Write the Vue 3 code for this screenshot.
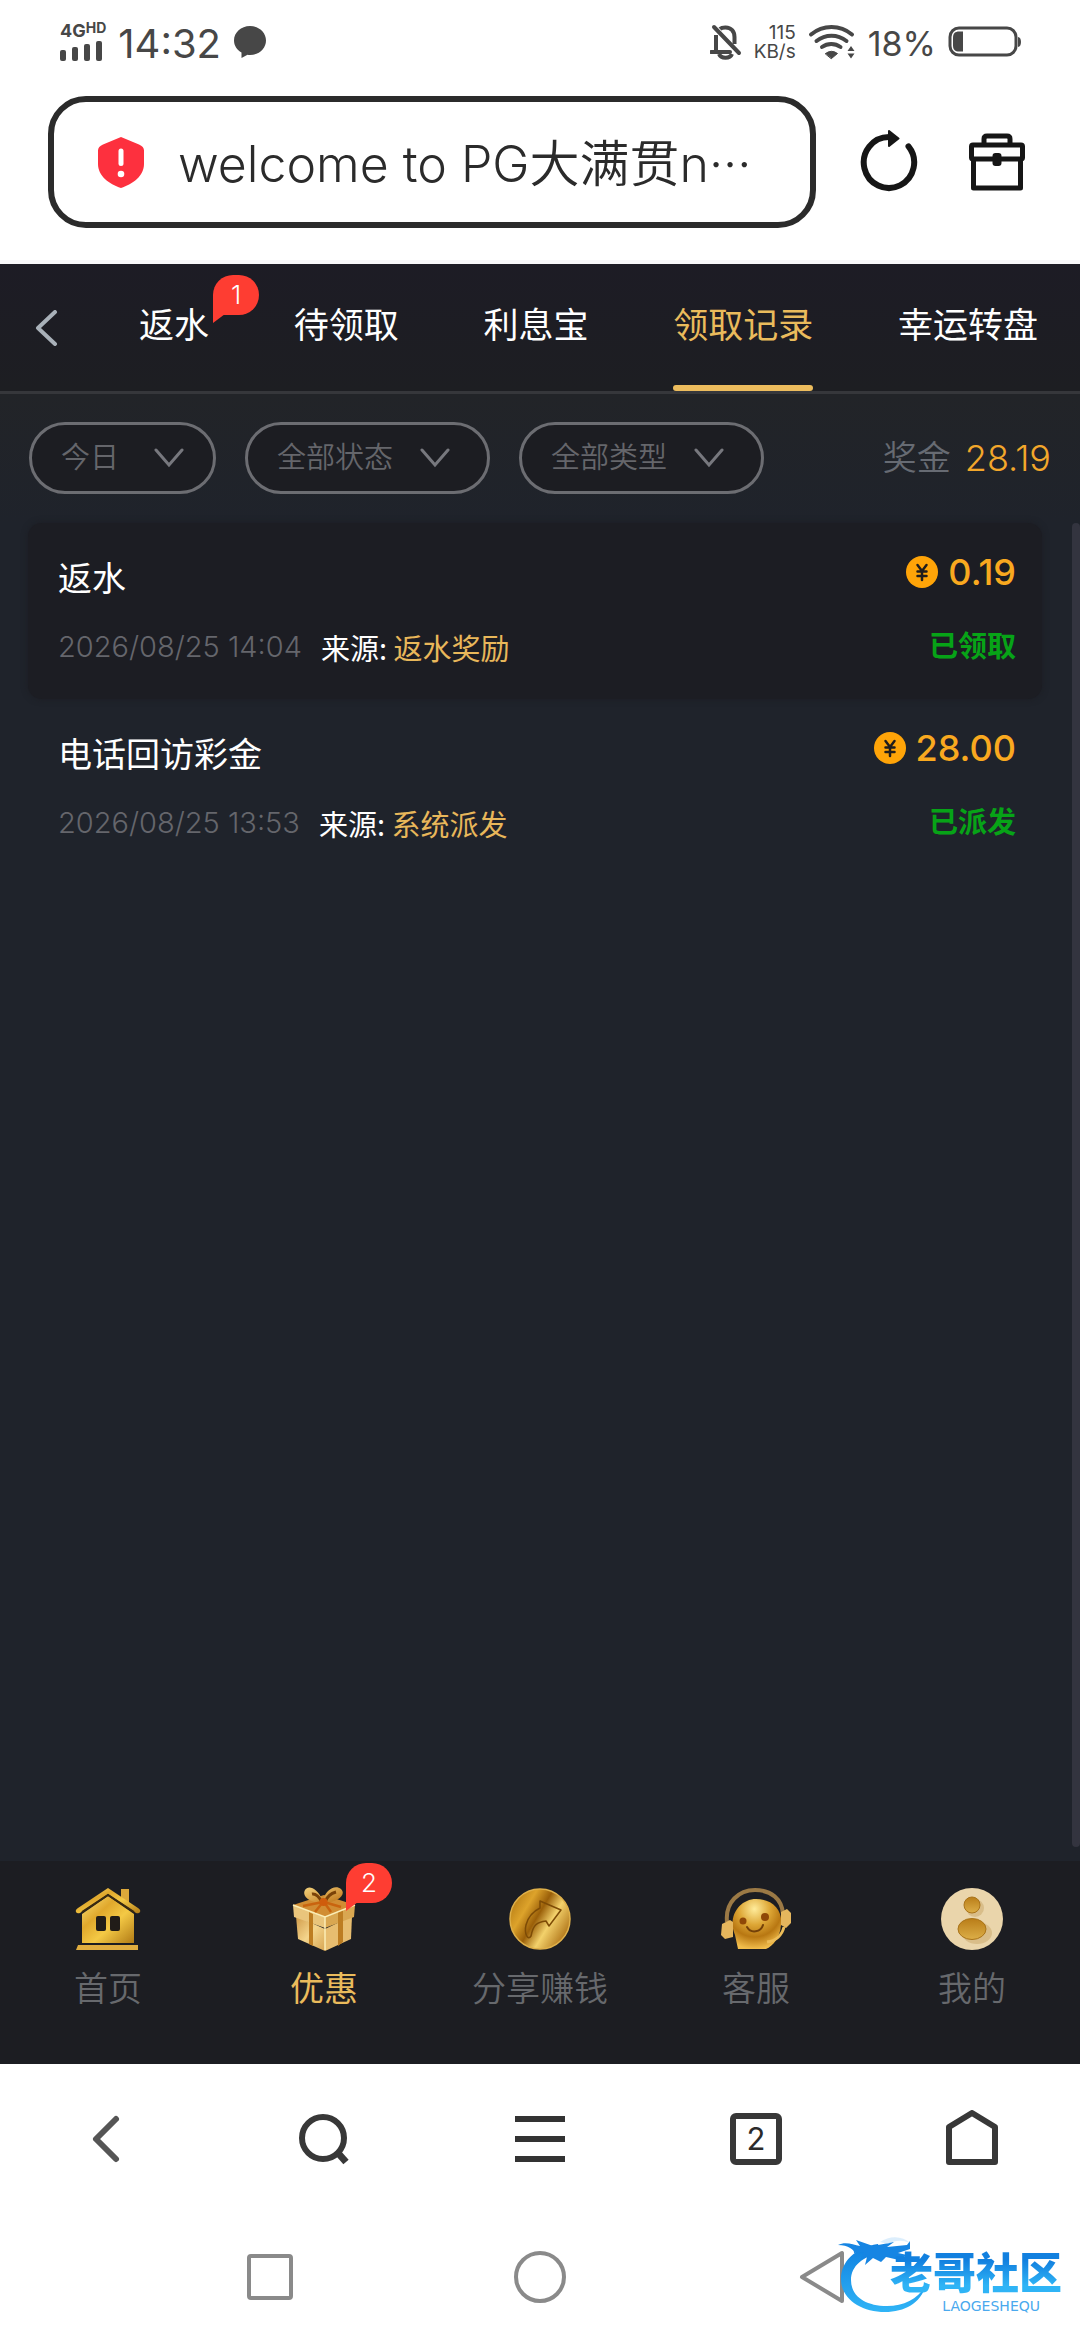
<script setup>
import { ref } from 'vue'

const address = ref('welcome to PG大满贯n···')

const tabs = [
  { label: '返水', badge: 1 },
  { label: '待领取' },
  { label: '利息宝' },
  { label: '领取记录' },
  { label: '幸运转盘' },
]
const activeTab = ref('领取记录')

const filters = [
  { id: 'date', name: '日期', value: '今日', short: true },
  { id: 'state', name: '状态', value: '全部状态' },
  { id: 'type', name: '类型', value: '全部类型' },
]

const records = [
  { title: '返水', time: '2026/08/25 14:04', source: '返水奖励', amount: '0.19', status: '已领取' },
  { title: '电话回访彩金', time: '2026/08/25 13:53', source: '系统派发', amount: '28.00', status: '已派发' },
]

const nav = [
  { icon: 'home', label: '首页' },
  { icon: 'gift', label: '优惠', badge: 2, active: true },
  { icon: 'share', label: '分享赚钱' },
  { icon: 'service', label: '客服' },
  { icon: 'me', label: '我的' },
]
</script>

<template>
  <div class="screen">
    <header class="status-bar">
      <div class="status-group">
        <div class="signal">
          <span class="network">4G<sup>HD</sup></span>
          <svg width="44" height="20" viewBox="0 0 44 20" fill="#474747">
            <rect x="0" y="9" width="6" height="11" rx="2" />
            <rect x="12" y="6" width="6" height="14" rx="2" />
            <rect x="24" y="3" width="6" height="17" rx="2" />
            <rect x="36" y="0" width="6" height="20" rx="2" />
          </svg>
        </div>
        <time class="clock">14:32</time>
        <svg width="34" height="34" viewBox="0 0 34 34" fill="#474747">
          <path d="M17 1C8 1 1 7.500 1 15.500c0 5 3 9.500 7.500 12V33l6-3.200c.8.2 1.700.2 2.500.2 9 0 16-6.500 16-14.500S26 1 17 1z" />
        </svg>
      </div>
      <div class="status-group">
        <svg width="32" height="36" viewBox="0 0 32 36" fill="none" stroke="#474747" stroke-width="4">
          <path d="M6 11v16M10 5c2-2 9-2.500 12 1 2 2 2.500 4 2.500 7v7" />
          <path d="M1 28h19" stroke-linecap="round" />
          <path d="M9 30c2 5 11 5 13 0" />
          <path d="M4 3l25 26" stroke-linecap="round" />
        </svg>
        <div class="speed"><span>115</span><span>KB/s</span></div>
        <svg width="48" height="36" viewBox="0 0 48 36" fill="none" stroke="#474747" stroke-width="4" stroke-linecap="round">
          <path d="M3 10.500C15 .5 32 .5 44 10.500" />
          <path d="M8.500 17c9-7 21-7 30 0" />
          <path d="M14 23c5.500-4 13-4 18.500 0" />
          <path d="M17.500 29.500q6-4.500 12 0l-6 5z" fill="#474747" stroke-width="1" />
          <path d="M39.500 27l3.500-5 3.500 5zM39.500 29.500l3.500 5 3.500-5z" fill="#474747" stroke="none" />
        </svg>
        <span class="percent">18%</span>
        <svg width="74" height="32" viewBox="0 0 74 32">
          <rect x="2" y="2" width="66" height="27" rx="9" fill="none" stroke="#474747" stroke-width="3" />
          <path d="M15 5.500H11c-4 0-6 2-6 6v8c0 4 2 6 6 6h4z" fill="#474747" />
          <path d="M70 11c4 0 4 10 0 10z" fill="#474747" />
        </svg>
      </div>
    </header>

    <div class="address-bar">
      <label class="address">
        <svg width="46" height="52" viewBox="0 0 46 52">
          <path d="M23 1L41 8.500q5 2 5 6V28C46 40 35 48 23 52 11 48 0 40 0 28V14.500q0-4 5-6z" fill="#fd303e" />
          <path d="M23 15v12.500" stroke="#fff" stroke-width="5" stroke-linecap="round" />
          <circle cx="23" cy="38" r="3.300" fill="#fff" />
        </svg>
        <input v-model="address" type="text" aria-label="网址" />
      </label>
      <div class="tools">
        <button class="plain" aria-label="刷新">
          <svg width="58" height="64" viewBox="0 -2 58 64" fill="none">
            <path d="M48.500 14.400A25.200 25.500 0 1 1 29 5" stroke="#161616" stroke-width="6" stroke-linecap="round" />
            <path d="M29-1v15L38.500 6.500z" fill="#161616" stroke="#161616" stroke-width="2" stroke-linejoin="round" />
          </svg>
        </button>
        <button class="plain" aria-label="工具箱">
          <svg width="58" height="58" viewBox="0 0 58 58" fill="none" stroke="#161616" stroke-width="5" stroke-linejoin="round">
            <path d="M16 12V6q0-3 3-3h20q3 0 3 3v6" />
            <rect x="3.500" y="12" width="51" height="14" rx="1.500" />
            <path d="M5.500 26v29h47V26" />
            <rect x="26.500" y="22" width="5" height="9" rx="1" fill="#161616" stroke-width="4" />
          </svg>
        </button>
      </div>
    </div>

    <main class="app">
      <nav class="tabs">
        <button class="plain back" aria-label="返回">
          <svg width="24" height="36" viewBox="0 0 24 36" fill="none" stroke="#a9b1b9" stroke-width="4" stroke-linecap="round" stroke-linejoin="round">
            <path d="M20 2L3 18l17 16" />
          </svg>
        </button>
        <div class="tab-list">
          <button
            v-for="tab in tabs"
            :key="tab.label"
            class="tab"
            :class="{ active: tab.label === activeTab }"
            @click="activeTab = tab.label"
          >
            {{ tab.label }}
            <span v-if="tab.badge" class="badge">{{ tab.badge }}</span>
          </button>
        </div>
      </nav>

      <section class="filters">
        <div v-for="filter in filters" :key="filter.id" class="filter" :class="{ short: filter.short }">
          <select :id="filter.id" :aria-label="filter.name">
            <option>{{ filter.value }}</option>
          </select>
          <svg width="30" height="20" viewBox="0 0 30 20" fill="none" stroke="#77787e" stroke-width="3" stroke-linecap="round">
            <path d="M2 2l13 15L28 2" />
          </svg>
        </div>
        <p class="total">奖金 <strong>28.19</strong></p>
      </section>

      <section class="records">
        <ul class="record-list">
          <li v-for="record in records" :key="record.time" class="record">
            <div class="info">
              <h2>{{ record.title }}</h2>
              <p class="meta">
                <time>{{ record.time }}</time>
                <span>来源: <em>{{ record.source }}</em></span>
              </p>
            </div>
            <div class="result">
              <p class="amount">
                <svg width="32" height="32" viewBox="0 0 32 32">
                  <circle cx="16" cy="16" r="16" fill="#ffa408" />
                  <path d="M11.500 9l4.500 6 4.500-6M11.500 15.500h9M11.500 20h9M16 15v9" fill="none" stroke="#201d1d" stroke-width="2.500" stroke-linecap="round" />
                </svg>
                {{ record.amount }}
              </p>
              <p class="state">{{ record.status }}</p>
            </div>
          </li>
        </ul>
        <div class="scrollbar"></div>
      </section>

      <nav class="bottom-nav">
        <a v-for="item in nav" :key="item.label" href="#" :class="{ active: item.active }">
          <span class="nav-icon">
            <svg v-if="item.icon === 'home'" width="66" height="64" viewBox="0 0 66 64">
              <defs>
                <linearGradient id="house" x1="0" y1="0" x2="1" y2="1">
                  <stop offset="0" stop-color="#fbe27a" />
                  <stop offset=".35" stop-color="#e0a82c" />
                  <stop offset=".6" stop-color="#f4c945" />
                  <stop offset="1" stop-color="#b17b16" />
                </linearGradient>
              </defs>
              <path d="M46 2h8v16l-8-6z" fill="#dca83a" />
              <path d="M33 9L59 27v29H7V27z" fill="url(#house)" />
              <path d="M33 1L63 21q3 2 2 4t-4 1L33 7 5 26q-3 1-4-1t2-4z" fill="url(#house)" />
              <path d="M7 25L33 8l26 17" fill="none" stroke="#3a2a10" stroke-width="2" />
              <path d="M3 58h60v5H1z" fill="#e0ad3f" />
              <rect x="21" y="29" width="10" height="15" rx="2" fill="#211c18" />
              <rect x="35" y="29" width="10" height="15" rx="2" fill="#211c18" />
            </svg>
            <svg v-else-if="item.icon === 'gift'" width="64" height="66" viewBox="0 0 64 66">
              <defs>
                <linearGradient id="box" x1="0" y1="0" x2="1" y2="1">
                  <stop offset="0" stop-color="#d09a48" />
                  <stop offset=".5" stop-color="#f4d58d" />
                  <stop offset="1" stop-color="#d7a552" />
                </linearGradient>
                <linearGradient id="ribbon" x1="0" y1="0" x2="1" y2="1">
                  <stop offset="0" stop-color="#f3d37e" />
                  <stop offset="1" stop-color="#bd7114" />
                </linearGradient>
              </defs>
              <path d="M4 30l29 13v22L6 53z" fill="url(#box)" />
              <path d="M60 30L33 43v22l26-12z" fill="#e7bd70" />
              <path d="M1 19L32 9l31 10-30 12z" fill="#d18d33" />
              <path d="M1 19l32 12v11L2 31z" fill="#e9c57c" />
              <path d="M63 19L33 31v11l29-11z" fill="#d9a751" />
              <path d="M17 26l4 2v32l-4-2zM46 26l5-2v32l-5 4z" fill="#bd7d22" />
              <path d="M1 19l32 12 30-12M33 31v33" fill="none" stroke="#fbedb5" stroke-width="1.500" />
              <path d="M30 17C20 17 9 11 13 4 16-1 25 1 31 15 33 4 43-2 49 3c6 6-4 13-16 14z" fill="url(#ribbon)" />
              <path d="M20 8q5-1 10 8M44 6q-8 2-11 10" fill="none" stroke="#7a4208" stroke-width="3" />
              <path d="M31 16L11 20M32 16l17 5M31 16l-8 10M32 16l7 10" stroke="#c9640f" stroke-width="2.500" />
              <circle cx="31.500" cy="16" r="4" fill="#cf5c0c" />
            </svg>
            <svg v-else-if="item.icon === 'share'" width="62" height="62" viewBox="0 0 62 62">
              <defs>
                <linearGradient id="disc" x1="0" y1=".2" x2="1" y2=".8">
                  <stop offset="0" stop-color="#b47a13" />
                  <stop offset=".25" stop-color="#dda32b" />
                  <stop offset=".45" stop-color="#9a5f09" />
                  <stop offset=".65" stop-color="#f3d16b" />
                  <stop offset="1" stop-color="#a4640a" />
                </linearGradient>
              </defs>
              <circle cx="31" cy="31" r="30" fill="url(#disc)" stroke="#dfb04a" stroke-width="1.500" />
              <path d="M31 20v-7l21 9-12 16-3-5c-9 1-13 4-15 15-3 5-7-2-5-11 2-8 8-14 14-17z" fill="none" stroke="#7d4b06" stroke-width="1.500" stroke-linejoin="round" />
            </svg>
            <svg v-else-if="item.icon === 'service'" width="70" height="62" viewBox="0 0 70 62">
              <defs>
                <radialGradient id="face" cx=".45" cy=".2" r=".8">
                  <stop offset="0" stop-color="#ffec9b" />
                  <stop offset=".4" stop-color="#dda635" />
                  <stop offset=".7" stop-color="#b87712" />
                  <stop offset="1" stop-color="#f1bd4c" />
                </radialGradient>
              </defs>
              <path d="M6 34C4 14 18 2 34 2s27 9 28 24" fill="none" stroke="#9b7945" stroke-width="4" />
              <path d="M17 61l-3-14C6 28 19 11 35 11c17 0 27 12 25 26-1 13-8 21-15 24z" fill="url(#face)" />
              <path d="M1 36l8-4 3 2v15l-8 2-4-4zM60 24l6-3 4 4v10l-5 5-5-3z" fill="#e5b65d" />
              <path d="M63 39c-2 8-8 14-17 15" fill="none" stroke="#edbd59" stroke-width="3" />
              <circle cx="22" cy="33" r="3.500" fill="#8f4807" />
              <circle cx="44" cy="29" r="4" fill="#8f4807" />
              <path d="M26 39c4 7 14 5 16-2" fill="none" stroke="#724009" stroke-width="2" stroke-linecap="round" />
            </svg>
            <svg v-else width="62" height="62" viewBox="0 0 62 62">
              <defs>
                <linearGradient id="person" x1="0" y1="0" x2="0" y2="1">
                  <stop offset="0" stop-color="#b97d18" />
                  <stop offset="1" stop-color="#dcae48" />
                </linearGradient>
              </defs>
              <circle cx="31" cy="31" r="31" fill="#ead5ab" />
              <ellipse cx="36" cy="45" rx="15" ry="11" fill="#c8a567" fill-opacity=".5" />
              <circle cx="34" cy="20" r="9" fill="#c8a567" fill-opacity=".5" />
              <circle cx="31" cy="17" r="8" fill="url(#person)" stroke="#a97319" />
              <ellipse cx="31" cy="41" rx="14" ry="10.500" fill="url(#person)" stroke="#a97319" />
            </svg>
            <span v-if="item.badge" class="badge">{{ item.badge }}</span>
          </span>
          {{ item.label }}
        </a>
      </nav>
    </main>

    <nav class="browser-bar">
      <button class="plain" aria-label="后退">
        <svg width="54" height="58" viewBox="0 0 54 58" fill="none" stroke="#555" stroke-width="6" stroke-linecap="round" stroke-linejoin="round">
          <path d="M35 9L15 29l20 20" />
        </svg>
      </button>
      <button class="plain" aria-label="搜索">
        <svg width="54" height="58" viewBox="0 0 54 58" fill="none" stroke="#383838" stroke-width="6">
          <circle cx="26" cy="28" r="21" />
          <path d="M41 43l8 9" stroke-width="7" />
        </svg>
      </button>
      <button class="plain" aria-label="菜单">
        <svg width="54" height="58" viewBox="0 0 54 58" stroke="#333" stroke-width="6">
          <path d="M2 9h50M2 29h50M2 49h50" />
        </svg>
      </button>
      <button class="plain" aria-label="页面"><span class="pages">2</span></button>
      <button class="plain" aria-label="主页">
        <svg width="54" height="58" viewBox="0 0 54 58" fill="none" stroke="#383838" stroke-width="6" stroke-linejoin="round">
          <path d="M4 17L27 3l23 14v35H4z" />
        </svg>
      </button>
    </nav>

    <footer class="system-bar">
      <button class="plain" aria-label="最近任务">
        <svg width="54" height="54" viewBox="0 0 54 54" fill="none" stroke="#8a8a8a" stroke-width="4">
          <rect x="6" y="6" width="42" height="42" rx="2" />
        </svg>
      </button>
      <button class="plain" aria-label="桌面">
        <svg width="54" height="54" viewBox="0 0 54 54" fill="none" stroke="#8a8a8a" stroke-width="4">
          <circle cx="27" cy="27" r="24" />
        </svg>
      </button>
      <button class="plain" aria-label="返回上一级">
        <svg class="triangle" width="54" height="54" viewBox="0 0 54 54" fill="none" stroke="#8a8a8a" stroke-width="4" stroke-linejoin="round">
          <path d="M59 3v48L19 27z" />
        </svg>
      </button>
      <div class="watermark">
        <svg width="92" height="80" viewBox="0 0 92 80">
          <defs>
            <linearGradient id="dragon" x1="0" y1="0" x2="0" y2="1">
              <stop offset="0" stop-color="#0f7fe0" />
              <stop offset="1" stop-color="#2fb4f6" />
            </linearGradient>
          </defs>
          <path d="M40 10C16 14 3 28 3 45c0 20 20 33 44 33 20 0 36-9 41-27-8 14-22 21-39 21-22 0-36-10-36-26 0-14 12-24 30-27z" fill="url(#dragon)" />
          <path d="M0 11c8-4 15 0 22 1L18 6l17 6 21-4-7 5 20-2 3-4v8l-12 4 9 2-8 5-13-3-5 5-8-4-8 7 2-8-7 3 4-8-10 1C17 16 10 11 0 11z" fill="#1685e3" />
          <path d="M42 8C52 1 65 2 72 9 63 5 55 7 50 10z" fill="#b9defa" fill-opacity=".5" />
        </svg>
        <div class="brand">
          <span class="brand-name">老哥社区</span>
          <span class="brand-latin">LAOGESHEQU</span>
        </div>
      </div>
    </footer>
  </div>
</template>

<style>
body {
  margin: 0;
}
</style>

<style scoped>
.screen {
  display: flex;
  flex-direction: column;
  min-height: 100vh;
  background: #fff;
  color: #2b2b2b;
  font-family: Inter, "Noto Sans CJK SC", sans-serif;
}

svg {
  display: block;
  flex: none;
}

h2,
p,
ul {
  margin: 0;
  padding: 0;
  list-style: none;
  font-weight: 400;
}

em,
strong {
  font-style: normal;
  font-weight: inherit;
}

.plain {
  display: flex;
  padding: 0;
  border: 0;
  background: none;
  font: inherit;
  color: inherit;
}

/* Status bar */
.status-bar {
  display: flex;
  justify-content: space-between;
  align-items: center;
  height: 84px;
  padding: 0 58px 0 60px;
  color: #474747;
}

.status-group {
  display: flex;
  align-items: center;
  gap: 12px;
}

.signal {
  display: flex;
  flex-direction: column;
  gap: 2px;
}

.network {
  display: flex;
  font-size: 18px;
  font-weight: 700;
  line-height: 16px;
}

.network sup {
  font-size: 14px;
  line-height: 10px;
}

.clock {
  padding-top: 4px;
  font-size: 40px;
  line-height: 48px;
}

.speed {
  display: flex;
  flex-direction: column;
  align-items: flex-end;
  font-size: 19px;
  line-height: 19px;
}

.percent {
  padding-top: 4px;
  font-size: 34px;
  line-height: 40px;
}

/* Address bar */
.address-bar {
  display: flex;
  align-items: center;
  gap: 44px;
  padding: 12px 54px 32px 48px;
  border-bottom: 4px solid #f7f7f9;
}

.tools {
  display: flex;
  align-items: center;
  gap: 50px;
}

.address {
  display: flex;
  flex: 1;
  align-items: center;
  gap: 34px;
  min-width: 0;
  height: 132px;
  box-sizing: border-box;
  padding: 0 44px;
  border: 6px solid #2b2b2b;
  border-radius: 38px;
}

.address input {
  flex: 1;
  min-width: 0;
  padding: 4px 0 0;
  border: 0;
  outline: 0;
  background: none;
  color: #2b2b2b;
  font: 350 50px/64px Inter, "Noto Sans CJK SC", sans-serif;
}

/* Page */
.app {
  display: flex;
  flex: 1;
  flex-direction: column;
  background: #1f232b;
}

.tabs {
  display: flex;
  height: 127px;
  padding: 0 42px 0 35px;
  border-bottom: 3px solid #36373b;
  background: linear-gradient(#1d1c25, #1d1e22);
}

.back {
  width: 104px;
  align-items: center;
}

.tab-list {
  display: flex;
  flex: 1;
  justify-content: space-between;
}

.tab {
  position: relative;
  padding: 0 0 6px;
  border: 0;
  background: none;
  color: #fff;
  font: 400 35px/48px Inter, "Noto Sans CJK SC", sans-serif;
}

.tab::after {
  content: "";
  position: absolute;
  left: 0;
  right: 0;
  bottom: 0;
  height: 6px;
  border-radius: 3px;
}

.tab.active {
  color: #eabb5c;
}

.tab.active::after {
  background: #ecbc5d;
}

.badge {
  position: absolute;
  width: 46px;
  height: 40px;
  border-radius: 20px 20px 20px 0;
  background: #fe3d32;
  color: #fff;
  font-size: 26px;
  font-weight: 350;
  line-height: 40px;
  text-align: center;
}

.badge::after {
  content: "";
  position: absolute;
  left: 0;
  top: 39px;
  border-top: 9px solid #fe3d32;
  border-right: 12px solid transparent;
}

.tab .badge {
  left: 74px;
  top: 11px;
}

.filters {
  display: flex;
  align-items: center;
  gap: 29px;
  padding: 28px 29px 29px;
  background: linear-gradient(#222428, #1f232b);
}

.filter {
  display: flex;
  align-items: center;
  box-sizing: border-box;
  width: 245px;
  height: 72px;
  padding: 0 37px 0 29px;
  border: 3px solid #6c6d72;
  border-radius: 36px;
  background: #1c1d22;
}

.filter.short {
  width: 187px;
  padding-right: 29px;
}

.filter select {
  flex: 1;
  min-width: 0;
  padding: 0;
  border: 0;
  outline: 0;
  appearance: none;
  background: none;
  color: #65666b;
  font: 350 29px/40px Inter, "Noto Sans CJK SC", sans-serif;
}

.total {
  display: flex;
  align-items: center;
  gap: 14px;
  margin-left: auto;
  color: #676b73;
  font-size: 34px;
  font-weight: 350;
  line-height: 48px;
}

.total strong {
  color: #f3a72b;
  font-size: 36px;
}

.records {
  display: flex;
  flex: 1;
  gap: 30px;
  padding: 0 0 14px 28px;
}

.record-list {
  flex: 1;
}

.record {
  display: flex;
  justify-content: space-between;
  padding: 28px 26px 32px 30px;
  border-radius: 14px;
}

.record:nth-child(odd) {
  background: #1c1d23;
  box-shadow: 0 0 6px #1c1d23;
}

.info {
  display: flex;
  flex-direction: column;
  gap: 20px;
}

.info h2 {
  color: #fff;
  font-size: 34px;
  line-height: 56px;
}

.meta {
  display: flex;
  gap: 19px;
  color: #fff;
  font-size: 29px;
  line-height: 40px;
}

.meta time {
  color: #65666c;
  font-weight: 300;
}

.meta span {
  font-family: "Noto Sans CJK SC", sans-serif;
}

.meta em {
  color: #e8b75a;
}

.result {
  display: flex;
  flex-direction: column;
  align-items: flex-end;
  gap: 34px;
}

.amount {
  display: flex;
  align-items: center;
  gap: 10px;
  color: #f9a91f;
  font-size: 36px;
  font-weight: 500;
  line-height: 42px;
}

.state {
  color: #07a317;
  font-size: 29px;
  font-weight: 700;
  line-height: 40px;
}

.scrollbar {
  width: 8px;
  border-radius: 4px;
  background: #33343f;
}

.bottom-nav {
  display: flex;
  padding: 27px 0 51px;
  background: #1c1d22;
}

.bottom-nav a {
  display: flex;
  flex: 1;
  flex-direction: column;
  align-items: center;
  gap: 15px;
  color: #67696d;
  font-size: 34px;
  font-weight: 350;
  line-height: 48px;
  text-decoration: none;
}

.bottom-nav a.active {
  color: #eabb5c;
  font-weight: 400;
}

.nav-icon {
  position: relative;
  display: flex;
  align-items: center;
  height: 62px;
}

.nav-icon .badge {
  left: 54px;
  top: -25px;
}

/* Browser and system controls */
.browser-bar {
  display: flex;
  align-items: center;
  height: 150px;
}

.browser-bar .plain {
  flex: 1;
  align-items: center;
  justify-content: center;
}

.pages {
  box-sizing: border-box;
  width: 52px;
  height: 52px;
  border: 6px solid #383838;
  border-radius: 6px;
  font-size: 31px;
  line-height: 40px;
  text-align: center;
}

.system-bar {
  position: relative;
  display: flex;
  align-items: center;
  justify-content: center;
  gap: 216px;
  height: 126px;
}

.triangle {
  overflow: visible;
}

.watermark {
  position: absolute;
  right: 18px;
  bottom: 26px;
  display: flex;
  align-items: flex-end;
}

.brand {
  display: flex;
  flex-direction: column;
  align-items: flex-end;
  margin-left: -40px;
}

.brand-name {
  background: linear-gradient(#1280df 25%, #2fb4f6 75%);
  background-clip: text;
  color: transparent;
  font-size: 43px;
  font-weight: 900;
  line-height: 50px;
}

.brand-latin {
  padding-right: 22px;
  color: #4aa9ee;
  font: 400 14px/16px "DejaVu Sans", sans-serif;
}
</style>
